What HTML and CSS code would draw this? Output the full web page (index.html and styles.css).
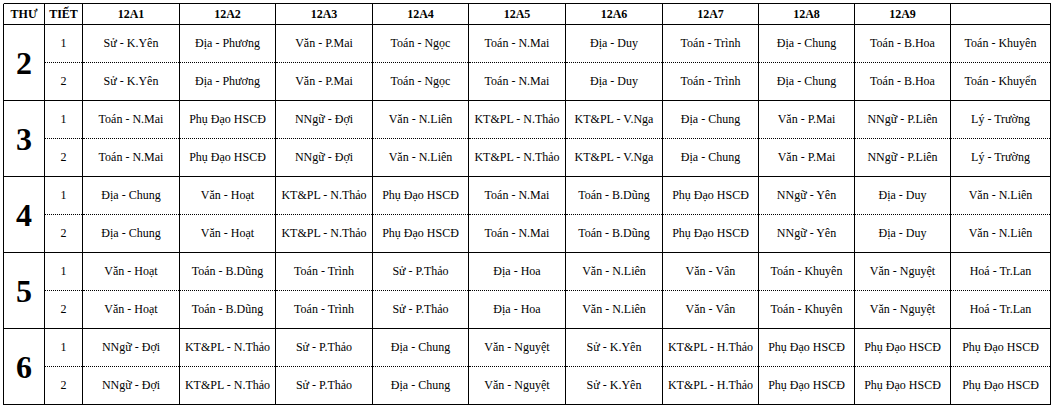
FILE: index.html
```html
<!DOCTYPE html>
<html lang="vi">
<head>
<meta charset="utf-8">
<link rel="stylesheet" href="styles.css">
</head>
<body>
<div class="wrap">
<span class="move-handle"></span>
<table class="tkb">
<colgroup>
<col class="c-thu"><col class="c-tiet">
<col class="c97"><col class="c96"><col class="c97"><col class="c96"><col class="c97"><col class="c97"><col class="c96"><col class="c96"><col class="c96"><col class="c-last">
</colgroup>
<tr class="head">
<th>THƯ</th><th>TIẾT</th><th>12A1</th><th>12A2</th><th>12A3</th><th>12A4</th><th>12A5</th><th>12A6</th><th>12A7</th><th>12A8</th><th>12A9</th><th></th>
</tr>
<tr class="p1">
<td class="day" rowspan="2">2</td><td>1</td>
<td>Sử - K.Yên</td><td>Địa - Phương</td><td>Văn - P.Mai</td><td>Toán - Ngọc</td><td>Toán - N.Mai</td><td>Địa - Duy</td><td>Toán - Trình</td><td>Địa - Chung</td><td>Toán - B.Hoa</td><td>Toán - Khuyên</td>
</tr>
<tr class="p2">
<td>2</td>
<td>Sử - K.Yên</td><td>Địa - Phương</td><td>Văn - P.Mai</td><td>Toán - Ngọc</td><td>Toán - N.Mai</td><td>Địa - Duy</td><td>Toán - Trình</td><td>Địa - Chung</td><td>Toán - B.Hoa</td><td>Toán - Khuyển</td>
</tr>
<tr class="p1">
<td class="day" rowspan="2">3</td><td>1</td>
<td>Toán - N.Mai</td><td>Phụ Đạo HSCĐ</td><td>NNgữ - Đợi</td><td>Văn - N.Liên</td><td>KT&amp;PL - N.Thảo</td><td>KT&amp;PL - V.Nga</td><td>Địa - Chung</td><td>Văn - P.Mai</td><td>NNgữ - P.Liên</td><td>Lý - Trường</td>
</tr>
<tr class="p2">
<td>2</td>
<td>Toán - N.Mai</td><td>Phụ Đạo HSCĐ</td><td>NNgữ - Đợi</td><td>Văn - N.Liên</td><td>KT&amp;PL - N.Thảo</td><td>KT&amp;PL - V.Nga</td><td>Địa - Chung</td><td>Văn - P.Mai</td><td>NNgữ - P.Liên</td><td>Lý - Trường</td>
</tr>
<tr class="p1">
<td class="day" rowspan="2">4</td><td>1</td>
<td>Địa - Chung</td><td>Văn - Hoạt</td><td>KT&amp;PL - N.Thảo</td><td>Phụ Đạo HSCĐ</td><td>Toán - N.Mai</td><td>Toán - B.Dũng</td><td>Phụ Đạo HSCĐ</td><td>NNgữ - Yên</td><td>Địa - Duy</td><td>Văn - N.Liên</td>
</tr>
<tr class="p2">
<td>2</td>
<td>Địa - Chung</td><td>Văn - Hoạt</td><td>KT&amp;PL - N.Thảo</td><td>Phụ Đạo HSCĐ</td><td>Toán - N.Mai</td><td>Toán - B.Dũng</td><td>Phụ Đạo HSCĐ</td><td>NNgữ - Yên</td><td>Địa - Duy</td><td>Văn - N.Liên</td>
</tr>
<tr class="p1">
<td class="day" rowspan="2">5</td><td>1</td>
<td>Văn - Hoạt</td><td>Toán - B.Dũng</td><td>Toán - Trình</td><td>Sử - P.Thảo</td><td>Địa - Hoa</td><td>Văn - N.Liên</td><td>Văn - Vân</td><td>Toán - Khuyên</td><td>Văn - Nguyệt</td><td>Hoá - Tr.Lan</td>
</tr>
<tr class="p2">
<td>2</td>
<td>Văn - Hoạt</td><td>Toán - B.Dũng</td><td>Toán - Trình</td><td>Sử - P.Thảo</td><td>Địa - Hoa</td><td>Văn - N.Liên</td><td>Văn - Vân</td><td>Toán - Khuyên</td><td>Văn - Nguyệt</td><td>Hoá - Tr.Lan</td>
</tr>
<tr class="p1">
<td class="day" rowspan="2">6</td><td>1</td>
<td>NNgữ - Đợi</td><td>KT&amp;PL - N.Thảo</td><td>Sử - P.Thảo</td><td>Địa - Chung</td><td>Văn - Nguyệt</td><td>Sử - K.Yên</td><td>KT&amp;PL - H.Thảo</td><td>Phụ Đạo HSCĐ</td><td>Phụ Đạo HSCĐ</td><td>Phụ Đạo HSCĐ</td>
</tr>
<tr class="p2">
<td>2</td>
<td>NNgữ - Đợi</td><td>KT&amp;PL - N.Thảo</td><td>Sử - P.Thảo</td><td>Địa - Chung</td><td>Văn - Nguyệt</td><td>Sử - K.Yên</td><td>KT&amp;PL - H.Thảo</td><td>Phụ Đạo HSCĐ</td><td>Phụ Đạo HSCĐ</td><td>Phụ Đạo HSCĐ</td>
</tr>
</table>
<span class="resize-handle"></span>
</div>
</body>
</html>
```
FILE: styles.css
```css
html, body {
  background: #fff;
}
body {
  margin: 3px;
  font-family: "Liberation Serif", "Times New Roman", serif;
  color: #000;
}
.wrap {
  position: relative;
  width: 1049px;
}
.tkb {
  border-collapse: collapse;
  table-layout: fixed;
  width: 1048px;
}
.c-thu { width: 41px; }
.c-tiet { width: 38px; }
.c97 { width: 97px; }
.c96 { width: 96px; }
.c-last { width: 100px; }

.tkb th,
.tkb td {
  border: 1px solid #000;
  padding: 0;
  text-align: center;
  vertical-align: middle;
  font-size: 12px;
  white-space: nowrap;
  overflow: hidden;
}
.tkb th {
  font-weight: bold;
}
.head {
  height: 21px;
}
.p1, .p2 {
  height: 38px;
}
.p1 td:not(.day) {
  border-bottom: 1px dotted #000;
}
.p2 td {
  border-top: 1px dotted #000;
}
.tkb td.day {
  font-size: 32px;
  font-weight: bold;
  line-height: 1;
}
.move-handle {
  position: absolute;
  left: -3px;
  top: -3px;
  width: 3px;
  height: 3px;
  border-right: 1px solid #bbb;
  border-bottom: 1px solid #bbb;
}
.resize-handle {
  position: absolute;
  right: -5px;
  bottom: -4px;
  width: 3px;
  height: 3px;
  border: 1px solid #aaa;
}
```
